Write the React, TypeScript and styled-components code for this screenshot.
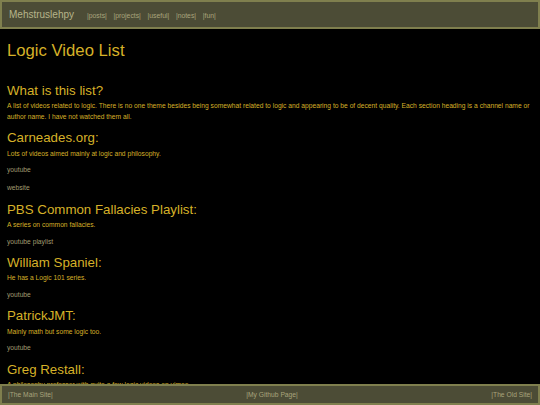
import React from 'react';
import styled, { createGlobalStyle } from 'styled-components';

const GlobalStyle = createGlobalStyle`
  html, body {
    margin: 0;
    padding: 0;
    background: #000;
    font-family: 'Liberation Sans', Arial, sans-serif;
  }
`;

const Header = styled.header`
  display: flex;
  align-items: baseline;
  gap: 13px;
  height: 25px;
  padding: 0 7px;
  background: #4c4c36;
  border: 2px solid #7f7f4e;
  box-sizing: content-box;
`;

const SiteTitle = styled.a`
  font-size: 10px;
  line-height: 25px;
  color: #b6b48a;
  text-decoration: none;
`;

const Nav = styled.nav`
  display: flex;
  gap: 6.7px;
`;

const NavLink = styled.a`
  font-size: 6.8px;
  line-height: 25px;
  color: #a9a47c;
  text-decoration: none;
`;

const Main = styled.main`
  padding: 11.7px 7px 40px;
  color: #d6b128;
`;

const Title = styled.h1`
  margin: 0 0 23.2px;
  font-size: 16.7px;
  line-height: 19px;
  font-weight: normal;
`;

const SectionHeading = styled.h2`
  margin: 7.5px 0 3.4px;
  font-size: 13.3px;
  line-height: 15px;
  font-weight: normal;
`;

const Text = styled.p`
  margin: 0 0 6px;
  font-size: 6.7px;
  line-height: 10.7px;
`;

const Link = styled.a`
  display: block;
  margin: 0 0 6px;
  font-size: 6.7px;
  line-height: 10.7px;
  color: #a29c70;
  text-decoration: none;

  & + & {
    margin-top: 7.5px;
  }
`;

const Footer = styled.footer`
  position: fixed;
  left: 0;
  right: 0;
  bottom: 0;
  display: flex;
  justify-content: space-between;
  align-items: center;
  height: 17px;
  padding: 0 6px;
  background: #4c4c36;
  border: 2px solid #7f7f4e;
  box-sizing: content-box;
`;

const FooterLink = styled.a`
  font-size: 6.7px;
  color: #a9a47c;
  text-decoration: none;
`;

type Section = {
  heading: string;
  text: string;
  links: string[];
};

const sections: Section[] = [
  {
    heading: 'Carneades.org:',
    text: 'Lots of videos aimed mainly at logic and philosophy.',
    links: ['youtube', 'website'],
  },
  {
    heading: 'PBS Common Fallacies Playlist:',
    text: 'A series on common fallacies.',
    links: ['youtube playlist'],
  },
  {
    heading: 'William Spaniel:',
    text: 'He has a Logic 101 series.',
    links: ['youtube'],
  },
  {
    heading: 'PatrickJMT:',
    text: 'Mainly math but some logic too.',
    links: ['youtube'],
  },
  {
    heading: 'Greg Restall:',
    text: 'A philosophy professor with quite a few logic videos on vimeo.',
    links: ['vimeo'],
  },
];

const navItems = ['posts', 'projects', 'useful', 'notes', 'fun'];

export default function App() {
  return (
    <>
      <GlobalStyle />
      <Header>
        <SiteTitle href="#">Mehstruslehpy</SiteTitle>
        <Nav>
          {navItems.map((item) => (
            <NavLink key={item} href="#">
              |{item}|
            </NavLink>
          ))}
        </Nav>
      </Header>
      <Main>
        <Title>Logic Video List</Title>
        <SectionHeading>What is this list?</SectionHeading>
        <Text>
          A list of videos related to logic. There is no one theme besides being
          somewhat related to logic and appearing to be of decent quality. Each
          section heading is a channel name or author name. I have not watched
          them all.
        </Text>
        {sections.map((s) => (
          <React.Fragment key={s.heading}>
            <SectionHeading>{s.heading}</SectionHeading>
            <Text>{s.text}</Text>
            {s.links.map((l) => (
              <Link key={l} href="#">
                {l}
              </Link>
            ))}
          </React.Fragment>
        ))}
      </Main>
      <Footer>
        <FooterLink href="#">|The Main Site|</FooterLink>
        <FooterLink href="#">|My Github Page|</FooterLink>
        <FooterLink href="#">|The Old Site|</FooterLink>
      </Footer>
    </>
  );
}
